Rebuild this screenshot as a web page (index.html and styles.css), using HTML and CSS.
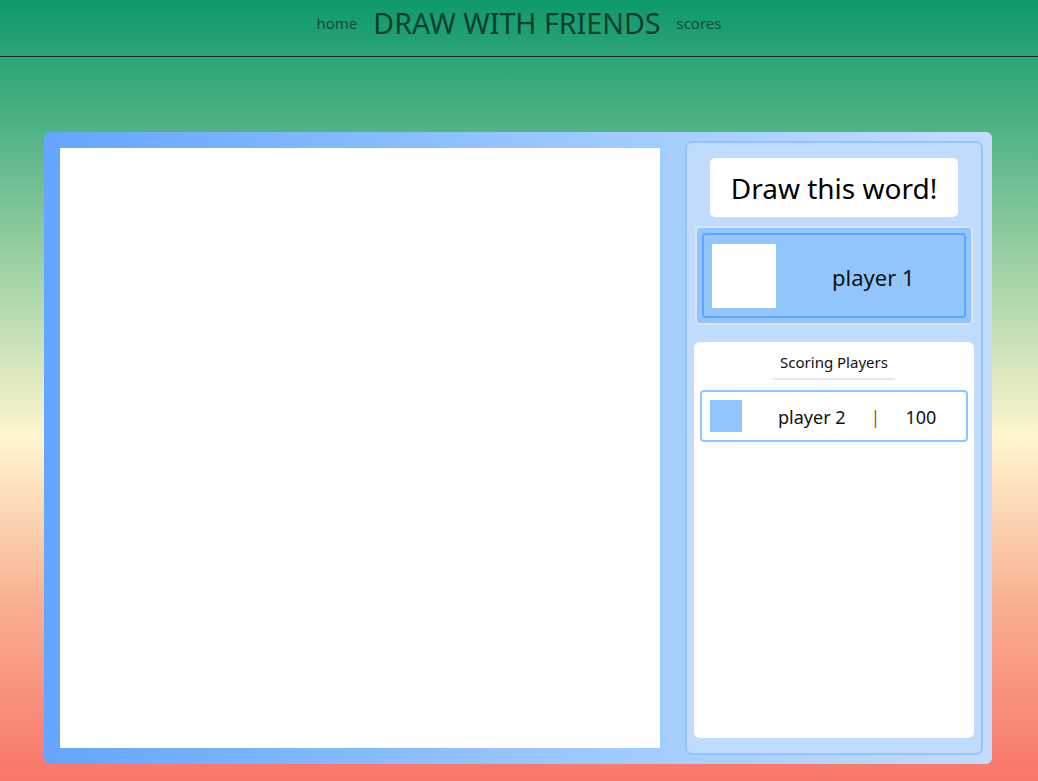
FILE: index.html
```html
<!DOCTYPE html>
<html>
<head>
<meta charset="utf-8">
<link rel="stylesheet" href="styles.css">
</head>
<body>
<header class="topbar">
  <nav class="nav">
    <a class="nav-link">home</a>
    <h1 class="title">DRAW WITH FRIENDS</h1>
    <a class="nav-link">scores</a>
  </nav>
</header>
<main class="game">
  <div class="canvas"></div>
  <aside class="sidebar">
    <div class="word">Draw this word!</div>
    <div class="drawer-wrap">
      <div class="drawer">
        <div class="swatch-big"></div>
        <div class="drawer-name">player 1</div>
      </div>
    </div>
    <section class="scores">
      <div class="scores-title">Scoring Players</div>
      <div class="score-row">
        <div class="swatch-small"></div>
        <span class="score-name">player 2</span>
        <span class="pipe">|</span>
        <span class="score-val">100</span>
      </div>
    </section>
  </aside>
</main>
</body>
</html>
```
FILE: styles.css
```css
* { box-sizing: border-box; }
html, body { margin: 0; height: 100%; }
body {
  font-family: "Noto Sans", "Open Sans", sans-serif;
  background: linear-gradient(180deg, #0e996c 0%, #53b485 17%, #fff6cf 56%, #f8ae8f 78%, #f8766a 100%);
  min-height: 781px;
  overflow: hidden;
}
.topbar {
  height: 57px;
  border-bottom: 1px solid #1f2d2a;
}
.nav {
  display: flex;
  justify-content: center;
  align-items: center;
  gap: 16px;
  height: 45px;
}
.nav-link {
  color: #154b38;
  font-size: 15px;
}
.title {
  margin: 0;
  font-weight: 400;
  font-size: 28.6px;
  color: #0f3d2e;
}
.game {
  margin: 75px 46px 0 44px;
  height: 632px;
  border-radius: 6px;
  background: linear-gradient(90deg, #64a5ff 0%, #a0cbff 60%, #c3dcff 100%);
  padding: 16px 9px 9px 16px;
  display: flex;
  gap: 25px;
}
.canvas {
  width: 600px;
  height: 600px;
  background: #fff;
  flex: none;
}
.sidebar {
  flex: 1;
  margin-top: -7px;
  background: #bfdbfe;
  border: 2px solid #93c5fd;
  border-radius: 7px;
  padding: 15px 8px 15px 8px;
  display: flex;
  flex-direction: column;
}
.word {
  align-self: center;
  width: 248px;
  height: 59px;
  background: #fff;
  border-radius: 5px;
  display: flex;
  align-items: center;
  justify-content: center;
  font-size: 28px;
  color: #000;
}
.drawer-wrap {
  margin-top: 9px;
  border: 2px solid #dde3ec;
  border-radius: 5px;
  background: #93c5fd;
  padding: 5px;
}
.drawer {
  border: 2px solid #60a5fa;
  border-radius: 4px;
  height: 85px;
  display: flex;
  align-items: center;
  padding-left: 8px;
}
.swatch-big {
  width: 64px;
  height: 64px;
  background: #fff;
}
.drawer-name {
  margin-left: 56px;
  font-size: 22px;
  color: #111;
  padding-top: 2px;
}
.scores {
  margin: 17px -1px 0;
  flex: 1;
  background: #fff;
  border-radius: 6px;
  padding: 10px 6px;
  display: flex;
  flex-direction: column;
  align-items: stretch;
}
.scores-title {
  align-self: center;
  font-size: 15px;
  color: #111;
  padding: 0 7px 6px;
  border-bottom: 2px solid #e5e7eb;
}
.score-row {
  margin-top: 10px;
  height: 52px;
  border: 2px solid #93c5fd;
  border-radius: 4px;
  display: flex;
  align-items: center;
  padding-left: 8px;
  font-size: 18px;
  color: #111;
}
.swatch-small {
  width: 32px;
  height: 32px;
  background: #93c5fd;
}
.score-name { margin-left: 36px; padding-top: 2px; }
.pipe { margin-left: 25px; color: #a85a00; padding-top: 2px; }
.score-val { margin-left: 25px; padding-top: 2px; }
```
